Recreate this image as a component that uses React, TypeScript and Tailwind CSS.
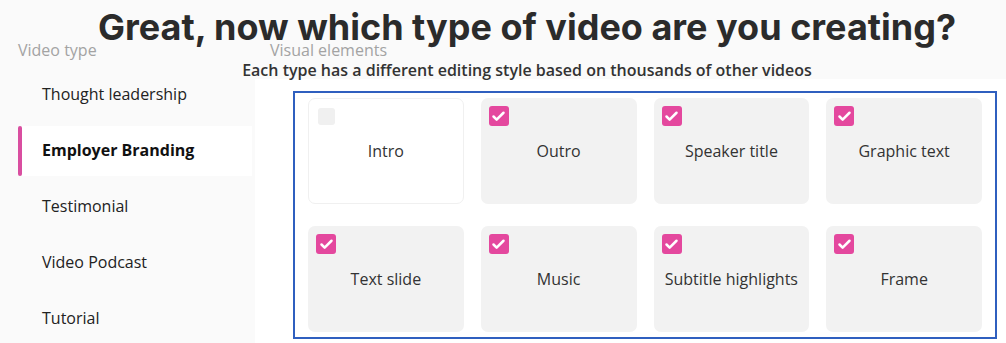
import { Check } from 'lucide-react'

const videoTypes = ['Thought leadership', 'Employer Branding', 'Testimonial', 'Video Podcast', 'Tutorial']

const elements = [
  { label: 'Intro', checked: false },
  { label: 'Outro', checked: true },
  { label: 'Speaker title', checked: true },
  { label: 'Graphic text', checked: true },
  { label: 'Text slide', checked: true },
  { label: 'Music', checked: true },
  { label: 'Subtitle highlights', checked: true },
  { label: 'Frame', checked: true },
]

function ElementCard({ label, checked }: { label: string; checked: boolean }) {
  return (
    <div
      className={
        checked
          ? 'relative flex h-[106px] items-center justify-center rounded-[7px] bg-[#f2f2f2]'
          : 'relative flex h-[106px] items-center justify-center rounded-[7px] border border-[#f0f0f0] bg-white'
      }
    >
      {checked ? (
        <span className="absolute left-[8px] top-[8px] flex h-[20px] w-[20px] items-center justify-center rounded-[3px] bg-[#e4489e]">
          <Check className="h-[15px] w-[15px] text-white" strokeWidth={4} />
        </span>
      ) : (
        <span className="absolute left-[9px] top-[9px] h-[17px] w-[17px] rounded-[3px] bg-[#f0f0f0]" />
      )}
      <span className="text-[16px] leading-6 text-[#333]">{label}</span>
    </div>
  )
}

export default function App() {
  return (
    <div className="relative flex h-[343px] w-full overflow-hidden bg-[#fafafa] font-['Open_Sans',sans-serif]">
      {/* left: video types */}
      <aside className="w-[255px] shrink-0 pt-[38px]">
        <div className="pl-[18px] text-[16px] leading-6 text-[#a3a3a3]">Video type</div>
        <ul className="mt-[8px] flex flex-col gap-[6px]">
          {videoTypes.map((t) => {
            const active = t === 'Employer Branding'
            return (
              <li key={t} className="ml-[18px] mr-[3px] flex h-[50px]">
                <span className={active ? 'w-[4px] rounded-full bg-[#d94ea0]' : 'w-[4px]'} />
                <span
                  className={
                    active
                      ? 'flex flex-1 items-center bg-white pb-[2px] pl-[20px] text-[16px] font-bold text-[#111]'
                      : 'flex flex-1 items-center pb-[2px] pl-[20px] text-[16px] text-[#222]'
                  }
                >
                  {t}
                </span>
              </li>
            )
          })}
        </ul>
      </aside>

      {/* right: visual elements */}
      <section className="flex flex-1 flex-col pt-[38px]">
        <div className="pl-[15px] text-[16px] leading-6 text-[#a3a3a3]">Visual elements</div>
        <div className="mt-[17px] flex-1 bg-white pl-[38px] pr-[9px] pt-[12px]">
          <div className="grid grid-cols-4 gap-x-[17px] gap-y-[22px] border-2 border-[#2f5fbf] px-[13px] py-[5px]">
            {elements.map((el) => (
              <ElementCard key={el.label} label={el.label} checked={el.checked} />
            ))}
          </div>
        </div>
      </section>

      {/* heading overlay */}
      <div className="absolute inset-x-0 top-0 flex flex-col items-center pl-[48px]">
        <h1 className="pt-[5px] font-['Inter',sans-serif] text-[36px] font-bold leading-[44px] text-[#2b2b2b]">
          Great, now which type of video are you creating?
        </h1>
        <p className="absolute top-[60px] text-[16px] font-semibold leading-5 text-[#333]">
          Each type has a different editing style based on thousands of other videos
        </p>
      </div>
    </div>
  )
}
